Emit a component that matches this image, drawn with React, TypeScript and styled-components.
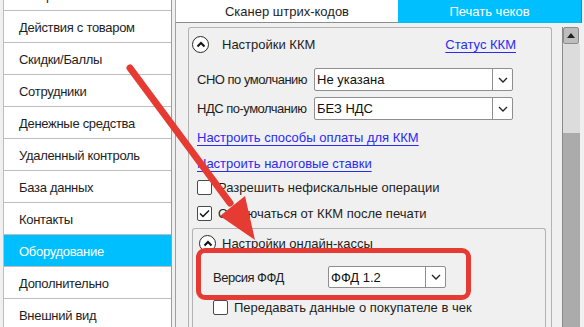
import styled, { createGlobalStyle } from "styled-components";

const GlobalStyle = createGlobalStyle`
  html, body {
    margin: 0;
    padding: 0;
    background: #f0f0f0;
  }
  * {
    box-sizing: border-box;
  }
`;

const Page = styled.div`
  position: relative;
  width: 584px;
  height: 327px;
  overflow: hidden;
  display: flex;
  background: #f0f0f0;
  font-family: "Liberation Sans", Arial, sans-serif;
  font-size: 13px;
  color: #1e1e1e;
`;

const Sidebar = styled.div`
  width: 169px;
  margin-left: 3px;
  margin-top: -21px;
  display: flex;
  flex-direction: column;
  background: #ffffff;
  border-left: 1px solid #bdbdbd;
  border-right: 1px solid #9c9c9c;
  flex-shrink: 0;
`;

const NavItem = styled.div<{ $active?: boolean }>`
  height: 32px;
  flex-shrink: 0;
  display: flex;
  align-items: center;
  padding: 2px 0 0 15px;
  border-bottom: 1px solid #bdbdbd;
  background: ${(p) => (p.$active ? "#00bfff" : "#ffffff")};
  color: ${(p) => (p.$active ? "#ffffff" : "#1e1e1e")};
  letter-spacing: -0.3px;
  white-space: nowrap;
`;

const Main = styled.div`
  flex: 1;
  margin-left: 3px;
  display: flex;
  flex-direction: column;
`;

const Tabs = styled.div`
  display: flex;
  height: 23px;
  flex-shrink: 0;
`;

const Tab = styled.div<{ $active?: boolean; $width: number }>`
  width: ${(p) => p.$width}px;
  display: flex;
  align-items: center;
  justify-content: center;
  background: ${(p) => (p.$active ? "#00bfff" : "#ffffff")};
  color: ${(p) => (p.$active ? "#ffffff" : "#1e1e1e")};
  border-left: ${(p) => (p.$active ? "none" : "1px solid #adadad")};
  border-bottom: ${(p) => (p.$active ? "none" : "1px solid #8c8c8c")};
  border-right: ${(p) => (p.$active ? "1px solid #6f6f6f" : "none")};
`;

const Content = styled.div`
  flex: 1;
  display: flex;
  border-left: 1px solid #a0a0a0;
  padding: 4px 0 0 12px;
  min-height: 0;
`;

const GroupBox = styled.div`
  width: 364px;
  border: 1px solid #b3b3b3;
  border-bottom: none;
  border-radius: 3px 3px 0 0;
  padding: 4px 37px 0 8px;
  display: flex;
  flex-direction: column;
  & > * {
    flex-shrink: 0;
  }
`;

const InnerGroup = styled.div`
  margin: 5px -32px 0 -5px;
  border: 1px solid #b3b3b3;
  border-bottom: none;
  border-radius: 3px 3px 0 0;
  padding: 2px 0 0 6px;
  display: flex;
  flex-direction: column;
  height: 120px;
  & > * {
    flex-shrink: 0;
  }
`;

const GroupHeader = styled.div<{ $shift: number; $gap: number }>`
  display: flex;
  align-items: center;
  height: 24px;
  margin-left: ${(p) => p.$shift}px;
  gap: ${(p) => p.$gap}px;
`;

const CollapseButton = styled.div`
  width: 17px;
  height: 17px;
  border: 1.5px solid #2a2a2a;
  border-radius: 50%;
  display: flex;
  align-items: center;
  justify-content: center;
  background: #ffffff;
`;

const Link = styled.span`
  color: #2b2bf0;
  text-decoration: underline;
  text-underline-offset: 3px;
  white-space: nowrap;
`;

const StatusLink = styled(Link)`
  margin-left: auto;
  margin-right: -2px;
`;

const LinkRow = styled.div<{ $top: number }>`
  height: 20px;
  display: flex;
  align-items: center;
  margin-top: ${(p) => p.$top}px;
`;

const FieldRow = styled.div<{ $top: number; $indent?: number }>`
  display: flex;
  align-items: center;
  margin-top: ${(p) => p.$top}px;
  padding-left: ${(p) => p.$indent || 0}px;
`;

const FieldLabel = styled.div<{ $width: number }>`
  width: ${(p) => p.$width}px;
  letter-spacing: -0.5px;
  white-space: nowrap;
`;

const Select = styled.div<{ $width: number; $height: number }>`
  width: ${(p) => p.$width}px;
  height: ${(p) => p.$height}px;
  display: flex;
  background: #ffffff;
  border: 1px solid #8e8e8e;
  border-radius: 2px;
`;

const SelectValue = styled.div`
  flex: 1;
  display: flex;
  align-items: center;
  padding-left: 2px;
  color: #111111;
  white-space: nowrap;
`;

const SelectArrow = styled.div`
  width: 20px;
  border-left: 1px solid #8e8e8e;
  display: flex;
  align-items: center;
  justify-content: center;
`;

const CheckRow = styled.div<{ $top: number; $indent?: number }>`
  height: 20px;
  display: flex;
  align-items: center;
  gap: 6px;
  margin-top: ${(p) => p.$top}px;
  padding-left: ${(p) => p.$indent || 0}px;
  white-space: nowrap;
`;

const CheckBox = styled.div`
  width: 15px;
  height: 15px;
  border: 1px solid #4a4a4a;
  border-radius: 2px;
  background: #ffffff;
  display: flex;
  align-items: center;
  justify-content: center;
  flex-shrink: 0;
`;

const ScrollBar = styled.div`
  width: 18px;
  margin-left: 10px;
  display: flex;
  flex-direction: column;
  border-left: 1px solid #8a8a8a;
`;

const ScrollButton = styled.div`
  height: 17px;
  margin: 0 1px 0 0;
  background: #bdbdbd;
  border: 1px solid #8c8c8c;
  border-radius: 2px;
  display: flex;
  align-items: center;
  justify-content: center;
`;

const ScrollTrack = styled.div`
  height: 89px;
  background: #dcdcdc;
`;

const ScrollThumb = styled.div`
  flex: 1;
  background: #ababab;
`;

const Highlight = styled.div`
  position: absolute;
  left: 196px;
  top: 248px;
  width: 275px;
  height: 52px;
  border: 5px solid #e53b33;
  border-radius: 9px;
  pointer-events: none;
`;

const ArrowLayer = styled.svg`
  position: absolute;
  left: 0;
  top: 0;
  pointer-events: none;
`;

const Chevron = () => (
  <svg width="10" height="6" viewBox="0 0 10 6">
    <path d="M1 1 L5 5 L9 1" fill="none" stroke="#222" strokeWidth="1.3" />
  </svg>
);

const UpIcon = () => (
  <svg width="10" height="7" viewBox="0 0 10 7">
    <path d="M1.5 5.5 L5 2 L8.5 5.5" fill="none" stroke="#111" strokeWidth="2" />
  </svg>
);

const Tick = () => (
  <svg width="11" height="9" viewBox="0 0 11 9">
    <path d="M1 4.5 L4 7.5 L10 1.5" fill="none" stroke="#111" strokeWidth="1.4" />
  </svg>
);

const navItems = [
  "Товары",
  "Действия с товаром",
  "Скидки/Баллы",
  "Сотрудники",
  "Денежные средства",
  "Удаленный контроль",
  "База данных",
  "Контакты",
  "Оборудование",
  "Дополнительно",
  "Внешний вид",
];

const App = () => {
  return (
    <>
      <GlobalStyle />
      <Page>
        <Sidebar>
          {navItems.map((item) => (
            <NavItem key={item} $active={item === "Оборудование"}>
              {item}
            </NavItem>
          ))}
        </Sidebar>
        <Main>
          <Tabs>
            <Tab $width={223}>Сканер штрих-кодов</Tab>
            <Tab $width={184} $active>
              Печать чеков
            </Tab>
          </Tabs>
          <Content>
            <GroupBox>
              <GroupHeader $shift={-5} $gap={13}>
                <CollapseButton>
                  <UpIcon />
                </CollapseButton>
                <span>Настройки ККМ</span>
                <StatusLink>Статус ККМ</StatusLink>
              </GroupHeader>
              <FieldRow $top={12}>
                <FieldLabel $width={117}>СНО по умолчанию</FieldLabel>
                <Select $width={199} $height={23}>
                  <SelectValue>Не указана</SelectValue>
                  <SelectArrow>
                    <Chevron />
                  </SelectArrow>
                </Select>
              </FieldRow>
              <FieldRow $top={6}>
                <FieldLabel $width={117}>НДС по-умолчанию</FieldLabel>
                <Select $width={199} $height={23}>
                  <SelectValue>БЕЗ НДС</SelectValue>
                  <SelectArrow>
                    <Chevron />
                  </SelectArrow>
                </Select>
              </FieldRow>
              <LinkRow $top={7}>
                <Link>Настроить способы оплаты для ККМ</Link>
              </LinkRow>
              <LinkRow $top={6}>
                <Link>Настроить налоговые ставки</Link>
              </LinkRow>
              <CheckRow $top={4}>
                <CheckBox />
                Разрешить нефискальные операции
              </CheckRow>
              <CheckRow $top={6}>
                <CheckBox>
                  <Tick />
                </CheckBox>
                Отключаться от ККМ после печати
              </CheckRow>
              <InnerGroup>
                <GroupHeader $shift={0} $gap={6}>
                  <CollapseButton>
                    <UpIcon />
                  </CollapseButton>
                  <span>Настройки онлайн-кассы</span>
                </GroupHeader>
                <FieldRow $top={11} $indent={14}>
                  <FieldLabel $width={115}>Версия ФФД</FieldLabel>
                  <Select $width={118} $height={22}>
                    <SelectValue>ФФД 1.2</SelectValue>
                    <SelectArrow>
                      <Chevron />
                    </SelectArrow>
                  </Select>
                </FieldRow>
                <CheckRow $top={9} $indent={14}>
                  <CheckBox />
                  Передавать данные о покупателе в чек
                </CheckRow>
              </InnerGroup>
            </GroupBox>
            <ScrollBar>
              <ScrollButton>
                <svg width="8" height="5" viewBox="0 0 8 5">
                  <path d="M0 5 L4 0 L8 5 Z" fill="#222" />
                </svg>
              </ScrollButton>
              <ScrollTrack />
              <ScrollThumb />
            </ScrollBar>
          </Content>
        </Main>
        <Highlight />
        <ArrowLayer width="584" height="327" viewBox="0 0 584 327">
          <line x1="130" y1="68" x2="230" y2="203" stroke="#e53b33" strokeWidth="7" strokeLinecap="round" />
          <polygon points="255,240 220,216 245,196" fill="#e53b33" />
        </ArrowLayer>
      </Page>
    </>
  );
};

export default App;
